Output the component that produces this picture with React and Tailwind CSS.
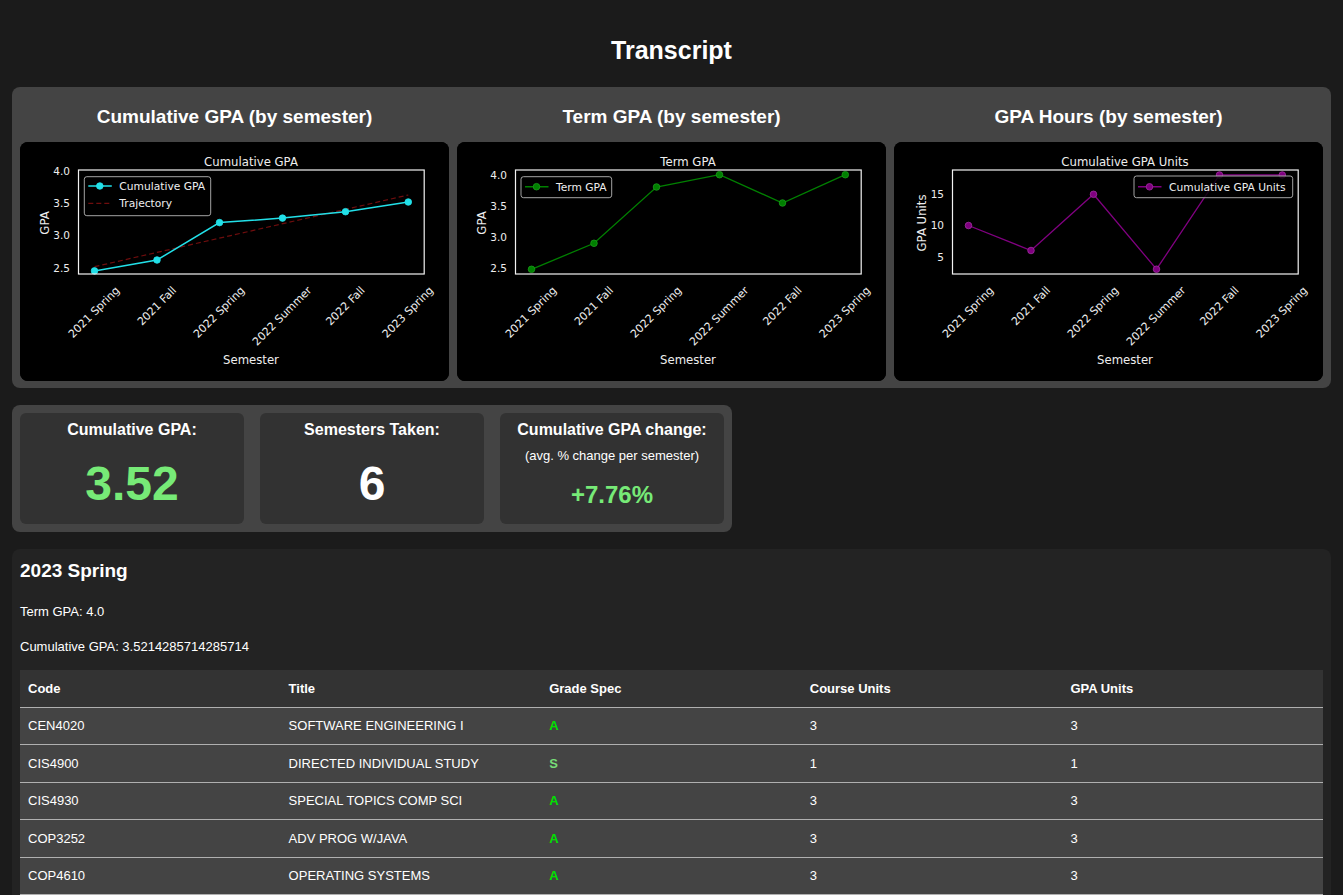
import React from 'react';

const XS = [74.5, 137, 199.5, 262.5, 325.5, 388.3];
const SEMESTERS = [
  { label: '2021 Spring', w: 67 },
  { label: '2021 Fall', w: 50.7 },
  { label: '2022 Spring', w: 67 },
  { label: '2022 Summer', w: 78.2 },
  { label: '2022 Fall', w: 50.7 },
  { label: '2023 Spring', w: 67 },
];

const charts = [
  {
    heading: 'Cumulative GPA (by semester)',
    title: 'Cumulative GPA',
    ylabel: 'GPA',
    ylabelX: 25,
    ticks: [[29, '4.0'], [61.2, '3.5'], [93.5, '3.0'], [125.7, '2.5']],
    series: [
      { ys: [128.9, 118, 80.6, 76.1, 69.7, 60], color: '#22e0e8', marker: '#22e0e8', edge: '#22e0e8', width: 1.5 },
    ],
    trajectory: { x1: 74.5, y1: 124.7, x2: 388.3, y2: 53 },
    legend: {
      x: 64.3, y: 34.7, w: 126.4, h: 39,
      items: [
        { y: 44, text: 'Cumulative GPA', color: '#22e0e8', marker: true },
        { y: 61.3, text: 'Trajectory', color: '#6e0d0d', dashed: true },
      ],
    },
  },
  {
    heading: 'Term GPA (by semester)',
    title: 'Term GPA',
    ylabel: 'GPA',
    ylabelX: 25,
    ticks: [[33, '4.0'], [63.9, '3.5'], [94.8, '3.0'], [125.7, '2.5']],
    series: [
      { ys: [127.3, 101.3, 45, 32.7, 61, 32.7], color: '#008000', marker: '#008000', edge: '#1a9a1a', width: 1.3 },
    ],
    legend: {
      x: 64, y: 34.7, w: 90.7, h: 21,
      items: [{ y: 44.7, text: 'Term GPA', color: '#008000', marker: true, edge: '#1a9a1a' }],
    },
  },
  {
    heading: 'GPA Hours (by semester)',
    title: 'Cumulative GPA Units',
    ylabel: 'GPA Units',
    ylabelX: 28,
    ticks: [[52.3, '15'], [83.5, '10'], [114.7, '5']],
    series: [
      { ys: [83.5, 108.5, 52.3, 127.2, 33, 33], color: '#800080', marker: '#800080', edge: '#a030a0', width: 1.3 },
    ],
    legend: {
      x: 240, y: 34, w: 158.7, h: 21.7,
      items: [{ y: 44.8, text: 'Cumulative GPA Units', color: '#800080', marker: true, edge: '#a030a0' }],
    },
  },
];

const Chart = ({ c }) => {
  const font = "'DejaVu Sans', 'Liberation Sans', sans-serif";
  return (
    <svg viewBox="0 0 429 239" className="block h-[239px] w-full" fontFamily={font}>
      <rect width="429" height="239" fill="#000" />
      <text x="231" y="24" textAnchor="middle" fontSize="11.7" fill="#eee">{c.title}</text>
      {c.ticks.map(([y, t]) => (
        <text key={t} x="50" y={y + 3.8} textAnchor="end" fontSize="10.5" fill="#eee">{t}</text>
      ))}
      <text
        transform={`translate(${c.ylabelX} 81) rotate(-90)`}
        textAnchor="middle"
        dominantBaseline="central"
        fontSize="11.7"
        fill="#eee"
      >
        {c.ylabel}
      </text>
      {c.trajectory && (
        <line
          x1={c.trajectory.x1}
          y1={c.trajectory.y1}
          x2={c.trajectory.x2}
          y2={c.trajectory.y2}
          stroke="#6e0d0d"
          strokeWidth="1.2"
          strokeDasharray="5 3"
        />
      )}
      {c.series.map((s, i) => (
        <g key={i}>
          <polyline
            points={XS.map((x, j) => `${x},${s.ys[j]}`).join(' ')}
            fill="none"
            stroke={s.color}
            strokeWidth={s.width}
          />
          {XS.map((x, j) => (
            <circle key={j} cx={x} cy={s.ys[j]} r="3.3" fill={s.marker} stroke={s.edge} strokeWidth="0.8" />
          ))}
        </g>
      ))}
      <rect x="58.5" y="28" width="345.7" height="104" fill="none" stroke="#f2f2f2" strokeWidth="1.2" />
      <rect
        x={c.legend.x}
        y={c.legend.y}
        width={c.legend.w}
        height={c.legend.h}
        rx="2.5"
        fill="#000"
        fillOpacity="0.8"
        stroke="#b5b5b5"
        strokeWidth="0.9"
      />
      {c.legend.items.map((it) => {
        const x0 = c.legend.x + 4;
        return (
          <g key={it.text}>
            <line
              x1={x0}
              y1={it.y}
              x2={x0 + 23.5}
              y2={it.y}
              stroke={it.color}
              strokeWidth={it.dashed ? 1.2 : 1.5}
              strokeDasharray={it.dashed ? '5 3' : undefined}
            />
            {it.marker && <circle cx={x0 + 11.5} cy={it.y} r="3.3" fill={it.color} stroke={it.edge || it.color} strokeWidth="0.8" />}
            <text x={x0 + 31} y={it.y + 3.8} fontSize="10.7" fill="#eee">{it.text}</text>
          </g>
        );
      })}
      {SEMESTERS.map((s, i) => {
        const px = XS[i] + 0.354 * (s.w + 5.8);
        const py = 149;
        return (
          <text
            key={s.label}
            x={px}
            y={py}
            textAnchor="end"
            fontSize="11"
            fill="#eee"
            transform={`rotate(-45 ${px} ${py})`}
          >
            {s.label}
          </text>
        );
      })}
      <text x="231" y="222" textAnchor="middle" fontSize="11.7" fill="#eee">Semester</text>
    </svg>
  );
};

const courses = [
  { code: 'CEN4020', title: 'SOFTWARE ENGINEERING I', grade: 'A', units: 3, gpa: 3 },
  { code: 'CIS4900', title: 'DIRECTED INDIVIDUAL STUDY', grade: 'S', units: 1, gpa: 1 },
  { code: 'CIS4930', title: 'SPECIAL TOPICS COMP SCI', grade: 'A', units: 3, gpa: 3 },
  { code: 'COP3252', title: 'ADV PROG W/JAVA', grade: 'A', units: 3, gpa: 3 },
  { code: 'COP4610', title: 'OPERATING SYSTEMS', grade: 'A', units: 3, gpa: 3 },
];

const App = () => {
  return (
    <div className="min-h-screen bg-[#1b1b1b] px-3 pb-6 font-['Liberation_Sans',Arial,sans-serif] text-white">
      <h1 className="pt-[35px] text-center text-[25px] font-bold leading-[30px]">Transcript</h1>

      <section className="mt-[22px] grid grid-cols-3 gap-2 rounded-lg bg-[#444] px-2 pt-2 pb-[7px]">
        {charts.map((c) => (
          <div key={c.title} className="flex flex-col">
            <h3 className="pt-[11px] pb-[14px] text-center text-[19px] font-bold leading-[22px]">{c.heading}</h3>
            <div className="overflow-hidden rounded-lg bg-black">
              <Chart c={c} />
            </div>
          </div>
        ))}
      </section>

      <section className="mt-[17px] flex w-[720px] gap-4 rounded-lg bg-[#444] p-2">
        <div className="flex h-[111px] w-[224px] flex-col items-center rounded-md bg-[#323232] pt-[8px]">
          <h4 className="text-[16px] font-bold leading-[18px]">Cumulative GPA:</h4>
          <p className="mt-[17px] text-[48px] font-bold leading-[55px] text-[#77ea77]">3.52</p>
        </div>
        <div className="flex h-[111px] w-[224px] flex-col items-center rounded-md bg-[#323232] pt-[8px]">
          <h4 className="text-[16px] font-bold leading-[18px]">Semesters Taken:</h4>
          <p className="mt-[17px] text-[48px] font-bold leading-[55px] text-white">6</p>
        </div>
        <div className="flex h-[111px] w-[224px] flex-col items-center rounded-md bg-[#323232] pt-[8px]">
          <h4 className="text-[16px] font-bold leading-[18px]">Cumulative GPA change:</h4>
          <p className="mt-[9px] text-[13px] leading-[15px]">(avg. % change per semester)</p>
          <p className="mt-[18px] text-[24px] font-bold leading-[28px] text-[#77ea77]">+7.76%</p>
        </div>
      </section>

      <section className="mt-[17px] rounded-lg bg-[#232323] px-2 pt-[11px] pb-4">
        <h2 className="text-[19px] font-bold leading-[22px]">2023 Spring</h2>
        <p className="mt-[22px] text-[13px] leading-[15px]">Term GPA: 4.0</p>
        <p className="mt-[20px] text-[13px] leading-[15px]">Cumulative GPA: 3.5214285714285714</p>
        <table className="mt-[16px] w-full table-fixed border-collapse text-[13px]">
          <thead>
            <tr className="h-[37px] border-b border-[#b0b0b0] bg-[#333]">
              <th className="pl-2 text-left font-bold">Code</th>
              <th className="pl-2 text-left font-bold">Title</th>
              <th className="pl-2 text-left font-bold">Grade Spec</th>
              <th className="pl-2 text-left font-bold">Course Units</th>
              <th className="pl-2 text-left font-bold">GPA Units</th>
            </tr>
          </thead>
          <tbody>
            {courses.map((r) => (
              <tr key={r.code} className="h-[37.6px] border-b border-[#b0b0b0] bg-[#444]">
                <td className="pl-2">{r.code}</td>
                <td className="pl-2">{r.title}</td>
                <td className={`pl-2 font-bold ${r.grade === 'S' ? 'text-[#77dd77]' : 'text-[#00e000]'}`}>{r.grade}</td>
                <td className="pl-2">{r.units}</td>
                <td className="pl-2">{r.gpa}</td>
              </tr>
            ))}
          </tbody>
        </table>
      </section>
    </div>
  );
};

export default App;
